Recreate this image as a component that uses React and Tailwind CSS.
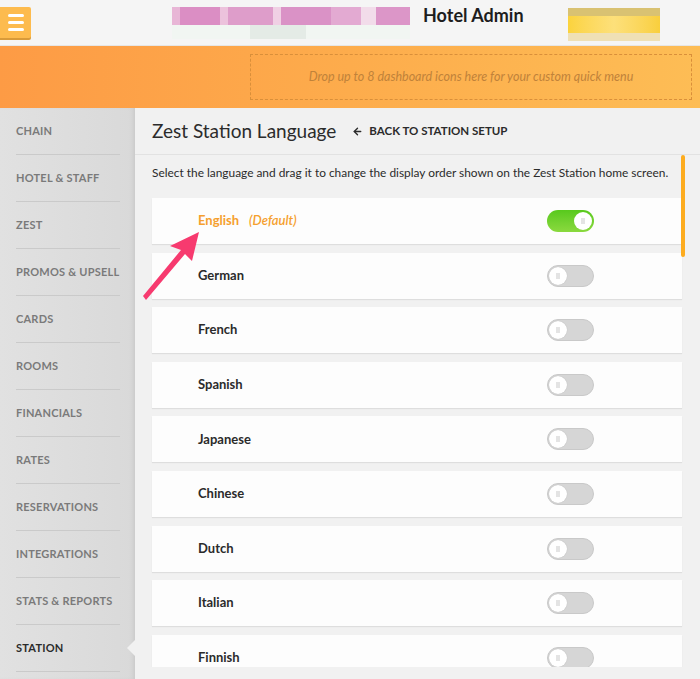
import { ArrowLeft } from "lucide-react";

const NAV = [
  "CHAIN",
  "HOTEL & STAFF",
  "ZEST",
  "PROMOS & UPSELL",
  "CARDS",
  "ROOMS",
  "FINANCIALS",
  "RATES",
  "RESERVATIONS",
  "INTEGRATIONS",
  "STATS & REPORTS",
  "STATION",
];

const LANGS = ["English", "German", "French", "Spanish", "Japanese", "Chinese", "Dutch", "Italian", "Finnish"];

function Toggle({ on }) {
  if (on) {
    return (
      <div className="flex h-[22px] w-[47px] items-center justify-end rounded-full bg-gradient-to-b from-[#57c91c] to-[#8ad93e] p-[2px]">
        <div className="grid h-[18px] w-[18px] place-items-center rounded-full bg-white">
          <span className="h-[6px] w-[4px] bg-[#e4e4e4]" />
        </div>
      </div>
    );
  }
  return (
    <div className="flex h-[22px] w-[47px] items-center rounded-full border border-[#c9c9c9] bg-[#d6d6d6] p-[1px]">
      <div className="grid h-[18px] w-[18px] place-items-center rounded-full bg-white shadow-[0_0_1px_rgba(0,0,0,0.2)]">
        <span className="h-[6px] w-[4px] bg-[#e4e4e4]" />
      </div>
    </div>
  );
}

function Header() {
  return (
    <div className="flex h-[46px] items-start border-b border-[#e6e6e6] bg-[#f5f5f5]">
      <div className="mt-[7px] flex h-[31px] w-[31px] flex-col items-center justify-center gap-[4px] rounded-r-[2px] bg-[#fdbb4e] shadow-[0_2px_0_#d99b3a]">
        <span className="h-[3px] w-[16px] rounded-sm bg-white" />
        <span className="h-[3px] w-[16px] rounded-sm bg-white" />
        <span className="h-[3px] w-[16px] rounded-sm bg-white" />
      </div>
      <div className="ml-[141px] mt-[7px] flex flex-col">
        <div className="flex h-[18px] w-[238px]">
          <span className="w-[8px] bg-[#e8b6d6]" />
          <span className="w-[40px] bg-[#db8ec4]" />
          <span className="w-[8px] bg-[#ecc2dc]" />
          <span className="w-[45px] bg-[#de9dca]" />
          <span className="w-[8px] bg-[#f0d0e4]" />
          <span className="w-[50px] bg-[#da92c6]" />
          <span className="w-[30px] bg-[#e3aad2]" />
          <span className="w-[15px] bg-[#f2dcea]" />
          <span className="w-[34px] bg-[#dc96c8]" />
        </div>
        <div className="flex h-[14px] w-[238px] bg-[#f1f6f2]">
          <span className="ml-[78px] w-[56px] bg-[#e4ebe6]" />
        </div>
      </div>
      <div className="ml-[13px] mt-[4px] font-['Lato',sans-serif] text-[18px] font-bold leading-[22px] text-[#1d1d1d]">
        Hotel Admin
      </div>
      <div className="ml-[44px] mt-[8px] flex h-[33px] w-[92px] flex-col bg-[#f7e7b0]">
        <span className="h-[8px] bg-[#d9c272]" />
        <span className="h-[17px] bg-gradient-to-r from-[#fbd33c] via-[#fde07a] to-[#f9cf3c]" />
        <span className="h-[8px] bg-[#efe0b5]" />
      </div>
    </div>
  );
}

function QuickBar() {
  return (
    <div className="flex h-[62px] items-center justify-end bg-gradient-to-r from-[#fd9b45] via-[#fdac4c] to-[#fdbd55] pr-[8px]">
      <div className="flex h-[46px] w-[442px] items-center justify-center border border-dashed border-[#d98f3a]">
        <span className="text-[12.5px] italic text-[#c0823a]">
          Drop up to 8 dashboard icons here for your custom quick menu
        </span>
      </div>
    </div>
  );
}

function Sidebar() {
  return (
    <div className="w-[135px] shrink-0 bg-gradient-to-r from-[#e1e1e1] to-[#d9d9d9] shadow-[inset_-4px_0_6px_-4px_rgba(0,0,0,0.12)]">
      {NAV.map((item) => {
        const active = item === "STATION";
        return (
          <div key={item} className="relative ml-[16px] mr-[15px] flex h-[47px] items-center border-b border-[#cacaca]">
            <span className={`text-[11px] font-bold tracking-[0.02em] ${active ? "text-[#2b2b2b]" : "text-[#7a7a7a]"}`}>
              {item}
            </span>
            {active ? (
              <span className="absolute right-[-15px] top-1/2 h-0 w-0 -translate-y-1/2 border-y-[8px] border-r-[8px] border-y-transparent border-r-[#f1f1f1]" />
            ) : null}
          </div>
        );
      })}
    </div>
  );
}

function Arrow() {
  return (
    <svg className="pointer-events-none absolute left-0 top-0" width="700" height="679">
      <polygon points="143,296 146,300 185,254 192,261 199,232 170,246 181,250" fill="#f73a6f" />
    </svg>
  );
}

export default function App() {
  return (
    <div className="relative h-[679px] w-[700px] overflow-hidden bg-[#f1f1f1] font-['Lato',sans-serif] text-[#2b2b2b]">
      <Header />
      <QuickBar />
      <div className="flex h-[571px]">
        <Sidebar />
        <div className="flex min-w-0 flex-1 flex-col">
          <div className="flex h-[47px] shrink-0 items-center border-b border-[#e2e2e2] pl-[17px]">
            <h1 className="text-[19px] font-normal text-[#2b2b2b]">Zest Station Language</h1>
            <div className="ml-[16px] flex items-center gap-[6px] text-[11.5px] font-bold text-[#2b2b2b]">
              <ArrowLeft size={11} strokeWidth={3} />
              BACK TO STATION SETUP
            </div>
          </div>
          <div className="relative flex h-[512px] flex-col overflow-hidden pl-[17px] pr-[18px]">
            <span className="absolute right-[15px] top-0 h-[102px] w-[4px] rounded-full bg-[#fdac1f]" />
            <p className="whitespace-nowrap pb-[17px] pt-[10px] text-[11.9px] leading-[16px] text-[#2b2b2b]">
              Select the language and drag it to change the display order shown on the Zest Station home screen.
            </p>
            <div className="flex flex-col gap-[8.6px]">
              {LANGS.map((lang, i) => (
                <div
                  key={lang}
                  className="flex h-[46px] shrink-0 items-center bg-[#fdfdfd] pl-[46px] pr-[88px] shadow-[0_1px_1px_rgba(0,0,0,0.08)]"
                >
                  {i === 0 ? (
                    <span className="text-[13px] font-bold text-[#f5a02e]">
                      English
                      <span className="ml-[10px] font-semibold italic">(Default)</span>
                    </span>
                  ) : (
                    <span className="text-[13px] font-bold text-[#2b2b2b]">{lang}</span>
                  )}
                  <div className="ml-auto">
                    <Toggle on={i === 0} />
                  </div>
                </div>
              ))}
            </div>
          </div>
        </div>
      </div>
      <Arrow />
    </div>
  );
}
